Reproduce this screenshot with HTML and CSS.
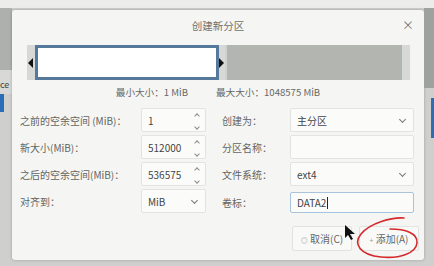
FILE: index.html
```html
<!DOCTYPE html>
<html lang="zh">
<head>
  <meta charset="UTF-8">
  <title>创建新分区</title>
  <link rel="stylesheet" href="styles.css">
</head>
<body>
  <div class="screen">
    <div class="side side-left">
      <div class="blk gray"></div>
      <div class="blk txt">ce</div>
      <div class="blk blue"></div>
      <div class="blk light"></div>
    </div>

    <div class="dialog">
      <div class="header">
        <span class="title">创建新分区</span>
        <span class="close">×</span>
      </div>

      <div class="bar">
        <div class="free-before"></div>
        <div class="handle left"></div>
        <div class="part"><div class="part-inner"></div></div>
        <div class="handle right"></div>
        <div class="free-after"></div>
      </div>

      <div class="limits">
        <span>最小大小：1 MiB</span>
        <span>最大大小：1048575 MiB</span>
      </div>

      <div class="form">
        <label>之前的空余空间 (MiB)：</label>
        <div class="field spin">1<span class="arrows"><i class="up"></i><i class="down"></i></span></div>
        <span></span>
        <label>创建为：</label>
        <div class="field select">主分区<span class="chev"></span></div>

        <label>新大小(MiB)：</label>
        <div class="field spin">512000<span class="arrows"><i class="up"></i><i class="down"></i></span></div>
        <span></span>
        <label>分区名称：</label>
        <div class="field"></div>

        <label>之后的空余空间(MiB)：</label>
        <div class="field spin">536575<span class="arrows"><i class="up"></i><i class="down"></i></span></div>
        <span></span>
        <label>文件系统：</label>
        <div class="field select">ext4<span class="chev"></span></div>

        <label>对齐到：</label>
        <div class="field select">MiB<span class="chev"></span></div>
        <span></span>
        <label class="low">卷标：</label>
        <div class="field focus low">DATA2<span class="caret"></span></div>
      </div>

      <div class="buttons">
        <button class="btn"><span class="ico">&#9678;</span> 取消(C)</button>
        <button class="btn"><span class="ico">+</span> 添加(A)</button>
      </div>
    </div>

    <div class="side side-right">
      <div class="blk dark"></div>
      <div class="blk blue2"></div>
    </div>

    <svg class="mark" width="434" height="266" viewBox="0 0 434 266">
      <path d="M404 218 C392 217 370 223 361 234 C353 244 360 255 381 257 C400 259 416 253 417 243 C418 233 405 229 390 229"
            fill="none" stroke="#d42a2c" stroke-width="1.6" stroke-linecap="round"/>
      <polygon points="345,225 345,238 348,235 351,240 353,239 350,234 355,234" fill="#111"/>
    </svg>
  </div>
</body>
</html>
```

FILE: styles.css
```css
body { margin: 0; background: #d2d3d0; font-family: "Noto Sans CJK SC", "Noto Sans", sans-serif; font-size: 10px; color: #5a5d5b; }
.screen { width: 434px; height: 266px; display: flex; padding-top: 10px; box-sizing: border-box; background: linear-gradient(#ecedeb 0 8px, #cfd0cd 8px); }
.side { display: flex; flex-direction: column; }
.side-left { width: 12px; }
.side-right { width: 10px; }
.blk.gray { height: 62px; margin-top: -2px; background: #aeb0ac; }
.blk.txt { height: 24px; font-size: 9px; color: #444; padding-top: 8px; box-sizing: border-box; background: #d8d9d6; }
.blk.blue { height: 18px; width: 4px; background: #2a6fb5; }
.blk.light { flex: 1; background: #cfd0cd; }
.blk.dark { height: 80px; margin-top: -2px; background: #9fa19e; }
.blk.blue2 { height: 40px; margin-top: 10px; width: 3px; margin-left: 7px; background: #2a6fb5; }

.dialog { width: 412px; height: 250px; background: #f5f6f3; border-radius: 3px; box-shadow: 0 0 3px rgba(0,0,0,0.25); display: flex; flex-direction: column; }
.header { height: 35px; display: flex; justify-content: center; padding-top: 8px; box-sizing: border-box; position: relative; }
.title { color: #6e706e; font-size: 10.5px; }
.close { position: absolute; right: 10px; top: 6px; font-size: 12px; color: #777; }

.bar { height: 35px; margin: 0 14px 0 15px; display: flex; align-items: center; background: #d7d9d6; }
.free-before { width: 2px; }
.handle { width: 0; height: 0; border-top: 5px solid transparent; border-bottom: 5px solid transparent; }
.handle.left { border-right: 5px solid #111; margin-left: -1px; }
.handle.right { border-left: 5px solid #111; }
.part { width: 184px; height: 35px; box-sizing: border-box; border: 3px solid #56789a; background: #fff; margin-left: 2px; }
.free-after { flex: 1; height: 35px; background: #b2b5b0; margin: 0 8px 0 1px; border-left: 2px solid #d0d2cf; }

.limits { display: flex; justify-content: center; gap: 28px; height: 22px; align-items: center; margin-top: 1px; font-size: 9.6px; color: #666; }

.form { display: grid; grid-template-columns: 121px 65px 16px 68px 124px; grid-auto-rows: 24px; row-gap: 3px; padding: 5px 0 0 8px; }
.form label { display: flex; align-items: center; color: #626563; }
.field { background: #fbfcfa; border: 1px solid #e2e4e1; border-radius: 2px; display: flex; align-items: center; padding-left: 6px; color: #444; position: relative; }
.arrows { position: absolute; right: 6px; top: 5px; display: flex; flex-direction: column; gap: 7px; }
.arrows i { width: 3px; height: 3px; border-color: #8a8c8a; border-style: solid; border-width: 1px 0 0 1px; transform: rotate(45deg); }
.arrows i.down { border-width: 0 1px 1px 0; }
.chev { position: absolute; right: 8px; top: 8px; width: 4px; height: 4px; border-right: 1.2px solid #777; border-bottom: 1.2px solid #777; transform: rotate(45deg); }
.field.focus { border-color: #a8c3dc; }
.caret { display: inline-block; width: 1px; height: 12px; background: #222; margin-left: 1px; }
.low { margin-top: 3px; }

.buttons { display: flex; justify-content: flex-end; gap: 7px; padding: 13px 5px 0 0; }
.btn { width: 60px; height: 25px; background: #f9faf8; border: 1px solid #e1e3e0; border-radius: 2px; font-family: inherit; font-size: 10px; color: #666; padding: 0; }
.btn .ico { font-size: 7px; color: #999; }

.mark { position: absolute; left: 0; top: 0; pointer-events: none; }
```
